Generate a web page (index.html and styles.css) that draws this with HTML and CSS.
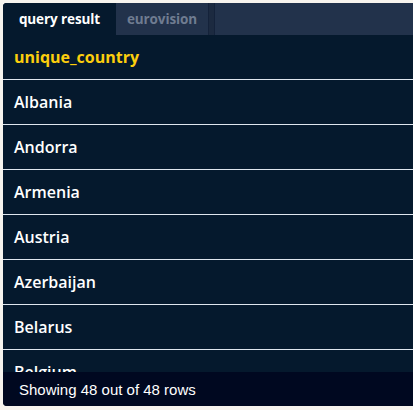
FILE: index.html
```html
<!DOCTYPE html>
<html>
<head>
<meta charset="utf-8">
<link rel="stylesheet" href="styles.css">
</head>
<body>
<div class="panel">
  <div class="tabs">
    <div class="tab active">query result</div>
    <div class="tab">eurovision</div>
    <div class="tab-sep"></div>
  </div>
  <div class="table">
    <div class="row head">unique_country</div>
    <div class="row">Albania</div>
    <div class="row">Andorra</div>
    <div class="row">Armenia</div>
    <div class="row">Austria</div>
    <div class="row">Azerbaijan</div>
    <div class="row">Belarus</div>
    <div class="row">Belgium</div>
  </div>
  <div class="footer">Showing 48 out of 48 rows</div>
</div>
</body>
</html>
```

FILE: styles.css
```css
html, body {
  margin: 0;
  padding: 0;
  background: #f7f4ee;
  overflow: hidden;
}
body {
  padding: 3px 0 0 3px;
  height: 410px;
  box-sizing: border-box;
}
.panel {
  width: 420px;
  height: 403px;
  background: #05192d;
  border-radius: 4px;
  overflow: hidden;
  display: flex;
  flex-direction: column;
  font-family: "Open Sans", "Liberation Sans", sans-serif;
}
.tabs {
  height: 32px;
  flex: 0 0 32px;
  display: flex;
  background: #22324b;
}
.tab {
  display: flex;
  align-items: center;
  justify-content: center;
  font-size: 13.5px;
  font-weight: 700;
  color: #6f7c91;
  background: #22324b;
  width: 92px;
  letter-spacing: -0.1px;
}
.tab.active {
  width: 113px;
  background: #05192d;
  color: #ffffff;
}
.tab-sep {
  width: 7px;
  background: #1c2a40;
  border-left: 1px solid #14223a;
  border-right: 1px solid #14223a;
  box-sizing: border-box;
}
.table {
  flex: 1;
  overflow: hidden;
}
.row {
  height: 44px;
  border-bottom: 1px solid #dfe6ee;
  display: flex;
  align-items: center;
  padding-left: 11px;
  font-size: 16px;
  font-weight: 600;
  color: #ffffff;
}
.row.head {
  color: #fcce0d;
  font-weight: 700;
}
.footer {
  flex: 0 0 34px;
  height: 34px;
  background: #000820;
  color: #ffffff;
  font-family: "Liberation Sans", Arial, sans-serif;
  font-size: 15px;
  display: flex;
  align-items: center;
  padding-left: 16px;
}
```
